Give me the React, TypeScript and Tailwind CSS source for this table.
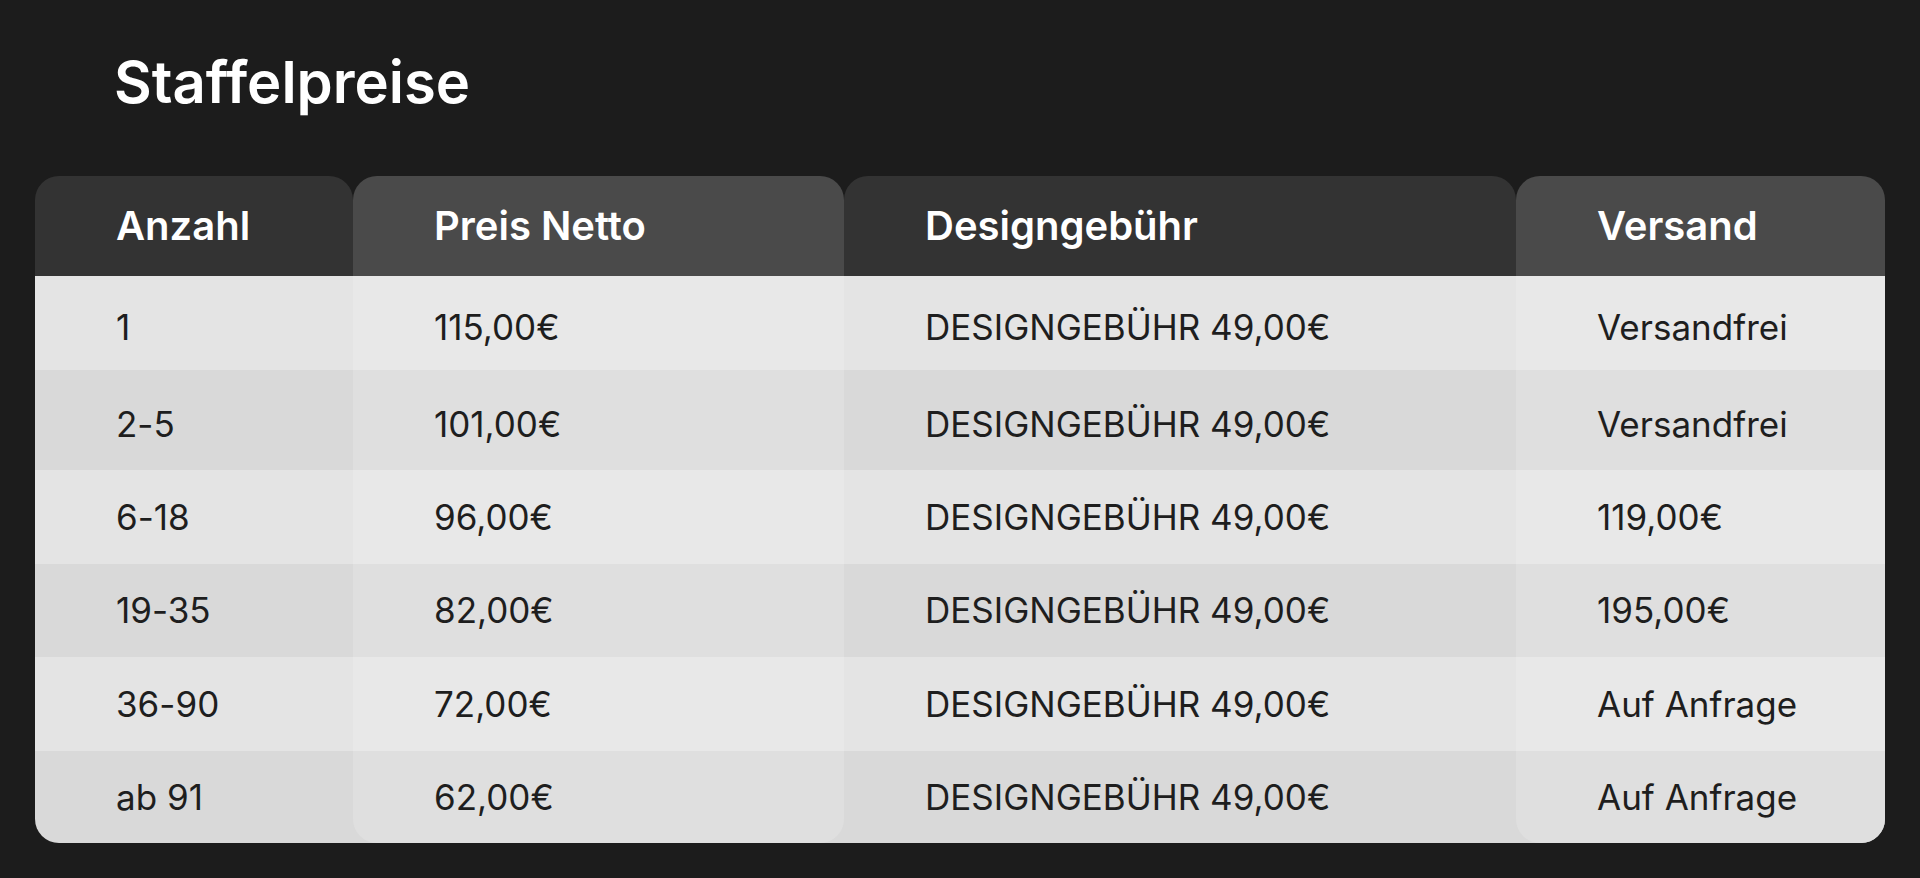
import React from "react";

type Col = {
  title: string;
  width: string;
  highlight: boolean;
  values: string[];
};

const rowHeights = ["h-[94px] pt-[8px]", "h-[100px] pt-[8px]", "h-[94px]", "h-[93px]", "h-[94px]", "h-[92px]"];

const columns: Col[] = [
  {
    title: "Anzahl",
    width: "w-[318px]",
    highlight: false,
    values: ["1", "2-5", "6-18", "19-35", "36-90", "ab 91"],
  },
  {
    title: "Preis Netto",
    width: "w-[491px]",
    highlight: true,
    values: ["115,00€", "101,00€", "96,00€", "82,00€", "72,00€", "62,00€"],
  },
  {
    title: "Designgebühr",
    width: "w-[672px]",
    highlight: false,
    values: Array(6).fill("DESIGNGEBÜHR 49,00€"),
  },
  {
    title: "Versand",
    width: "w-[369px]",
    highlight: true,
    values: ["Versandfrei", "Versandfrei", "119,00€", "195,00€", "Auf Anfrage", "Auf Anfrage"],
  },
];

function Column({ col, index }: { col: Col; index: number }) {
  const isFirst = index === 0;
  const isLast = index === columns.length - 1;
  return (
    <div className={`${col.width} flex shrink-0 flex-col`}>
      <div
        className={`flex h-[100px] items-center rounded-t-3xl pl-[81px] text-[40px] font-semibold text-white ${
          col.highlight ? "bg-[#4a4a4a]" : "bg-[#333333]"
        }`}
      >
        {col.title}
      </div>
      {col.values.map((v, i) => {
        const odd = i % 2 === 0;
        const lastRow = i === col.values.length - 1;
        const base = odd ? "bg-[#e4e4e4]" : "bg-[#d9d9d9]";
        const hi = odd ? "bg-[#e8e8e8]" : "bg-[#dfdfdf]";
        const cellText = `flex items-center pl-[81px] text-[35px] text-[#1e1e1e] ${rowHeights[i]}`;
        if (col.highlight && lastRow) {
          return (
            <div key={i} className={`${base} ${isLast ? "rounded-br-3xl" : ""}`}>
              <div className={`${hi} ${cellText} rounded-b-3xl`}>{v}</div>
            </div>
          );
        }
        return (
          <div
            key={i}
            className={`${col.highlight ? hi : base} ${cellText} ${
              isFirst && lastRow ? "rounded-bl-3xl" : ""
            }`}
          >
            {v}
          </div>
        );
      })}
    </div>
  );
}

export default function App() {
  return (
    <div className="min-h-screen bg-[#1c1c1c] px-[35px] pt-[48px] pb-[35px] font-['Inter',sans-serif] [font-variant-ligatures:none]">
      <h1 className="pl-[79px] text-[58px] font-semibold leading-[68px] text-white">Staffelpreise</h1>
      <div className="mt-[60px] flex">
        {columns.map((c, i) => (
          <Column key={c.title} col={c} index={i} />
        ))}
      </div>
    </div>
  );
}
